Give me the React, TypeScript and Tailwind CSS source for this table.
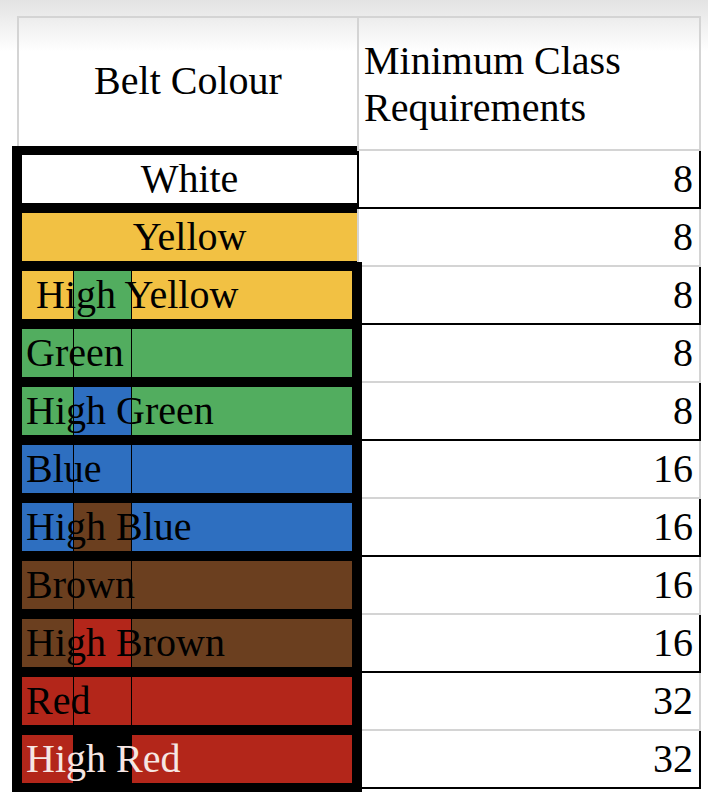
type Belt = {
  name: string;
  min: number;
  fill: string;
  stripe?: string;
  wide: boolean;
  text: string;
};

const BELTS: Belt[] = [
  { name: "White", min: 8, fill: "bg-white justify-center", wide: false, text: "text-black" },
  { name: "Yellow", min: 8, fill: "bg-[#f2c143] justify-center", wide: false, text: "text-black" },
  { name: "High Yellow", min: 8, fill: "bg-[#f2c143] pl-[14px]", stripe: "bg-[#52ad5f]", wide: true, text: "text-black" },
  { name: "Green", min: 8, fill: "bg-[#52ad5f] pl-[4px]", stripe: "bg-transparent", wide: true, text: "text-black" },
  { name: "High Green", min: 8, fill: "bg-[#52ad5f] pl-[4px]", stripe: "bg-[#2e6fc0]", wide: true, text: "text-black" },
  { name: "Blue", min: 16, fill: "bg-[#2e6fc0] pl-[4px]", stripe: "bg-transparent", wide: true, text: "text-black" },
  { name: "High Blue", min: 16, fill: "bg-[#2e6fc0] pl-[4px]", stripe: "bg-[#6b3f1f]", wide: true, text: "text-black" },
  { name: "Brown", min: 16, fill: "bg-[#6b3f1f] pl-[4px]", stripe: "bg-transparent", wide: true, text: "text-black" },
  { name: "High Brown", min: 16, fill: "bg-[#6b3f1f] pl-[4px]", stripe: "bg-[#b3261a]", wide: true, text: "text-black" },
  { name: "Red", min: 32, fill: "bg-[#b3261a] pl-[4px]", stripe: "bg-transparent", wide: true, text: "text-black" },
  { name: "High Red", min: 32, fill: "bg-[#b3261a] pl-[4px]", stripe: "bg-black", wide: true, text: "text-[#f6e6e3]" },
];

export default function App() {
  return (
    <div className="h-[797px] w-[708px] overflow-hidden bg-[linear-gradient(to_bottom,#e3e3e3,#ffffff_52px)] pt-[16px] [font-family:'Liberation_Serif','Times_New_Roman',serif] text-black">
      {/* header */}
      <div className="ml-[17px] flex h-[135px] w-[684px] border-2 border-[#d4d4d4]">
        <div className="flex w-[340px] shrink-0 items-center justify-center border-r-2 border-[#d4d4d4] pb-[6px] text-[40px] leading-[48px]">
          Belt Colour
        </div>
        <div className="flex flex-1 items-center pl-[5px] text-[40px] leading-[47px]">
          <div>
            Minimum Class
            <br />
            Requirements
          </div>
        </div>
      </div>

      {/* body */}
      <div className="ml-[12px] flex">
        <div className="relative z-10 -mt-[5px] flex w-[350px] shrink-0 flex-col">
          {BELTS.map((b, i) => (
            <div
              key={b.name}
              className={[
                "bg-black pt-[9px] pl-[10px]",
                i === BELTS.length - 1 ? "h-[66px] pb-[9px]" : "h-[58px] pb-[1px]",
                b.wide ? "w-[350px] pr-[10px]" : "w-[345px]",
              ].join(" ")}
            >
              <div className={["relative flex h-[48px] items-center text-[40px] leading-[48px]", b.fill].join(" ")}>
                {b.stripe ? (
                  <span className={["absolute inset-y-0 left-[51px] w-[59px] border-x border-black", b.stripe].join(" ")} />
                ) : null}
                <span className={["relative whitespace-nowrap", b.text].join(" ")}>{b.name}</span>
              </div>
            </div>
          ))}
        </div>

        <div className="-ml-[5px] flex w-[344px] shrink-0 flex-col">
          {BELTS.map((b, i) => (
            <div
              key={b.name}
              className={[
                "flex h-[58px] items-center justify-end border-x-2 border-b-2 bg-white pr-[6px] text-[40px] leading-[48px]",
                i % 2 === 0 ? "border-black" : "border-[#d4d4d4]",
              ].join(" ")}
            >
              {b.min}
            </div>
          ))}
        </div>
      </div>
    </div>
  );
}
